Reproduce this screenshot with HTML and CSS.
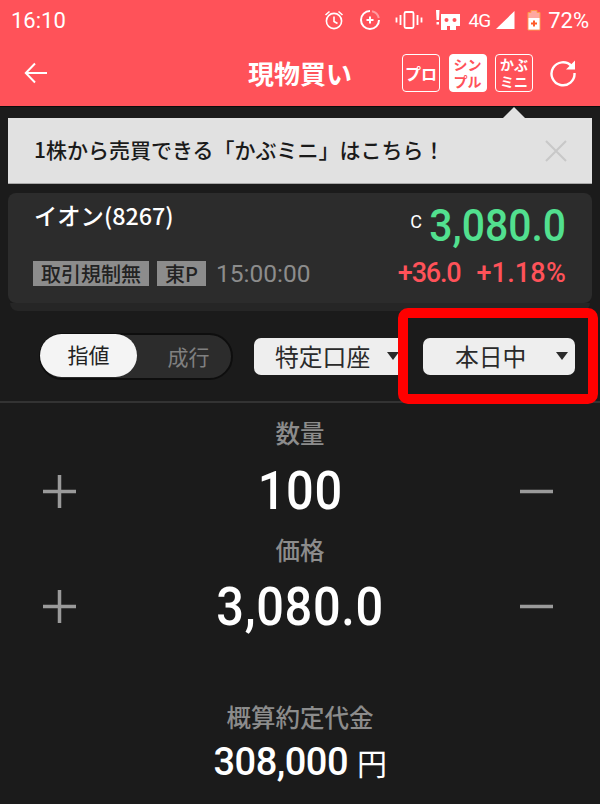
FILE: index.html
```html
<!DOCTYPE html>
<html lang="ja">
<head>
  <meta charset="UTF-8">
  <meta name="viewport" content="width=device-width, initial-scale=1">
  <title>現物買い</title>
  <link rel="stylesheet" href="styles.css">
</head>
<body>

  <header class="cabecera">
    <div class="estado">
      <span class="hora">16:10</span>
      <div class="estado-iconos">
        <svg class="ico-alarma" width="22" height="22" viewBox="0 0 22 22" fill="none" stroke="#fff" stroke-width="1.6">
          <circle cx="11" cy="12" r="7.6"/>
          <path d="M11 7.500V12.500L14.500 14.500M2.500 6L6.500 2.500M19.500 6L15.500 2.500"/>
        </svg>
        <svg class="ico-ahorro" width="22" height="22" viewBox="0 0 22 22" fill="none" stroke="#fff" stroke-width="2">
          <path d="M11 2A9 9 0 1 0 20 11"/>
          <path d="M13 2.300A9 9 0 0 1 19.800 9" stroke="#ff9a9e"/>
          <path d="M7.500 11H14.500M11 7.500V14.500"/>
        </svg>
        <svg class="ico-vibra" width="28" height="20" viewBox="0 0 28 20" fill="none" stroke="#fff" stroke-width="1.8">
          <rect x="9.500" y="2" width="9" height="16" rx="1.500"/>
          <path d="M5.500 5V15M1.500 7.500V12.500M22.500 5V15M26.500 7.500V12.500"/>
        </svg>
        <svg class="ico-robot" width="26" height="22" viewBox="0 0 26 22">
          <path fill="#fff" d="M1 1H4.500L4 11H1.500ZM1.500 13H4V15.500H1.500ZM6 5H25V17H21V21H15V17H12V21H6Z"/>
          <circle cx="11.500" cy="11" r="2" fill="#ff5259"/>
          <circle cx="19.500" cy="11" r="2" fill="#ff5259"/>
        </svg>
        <span class="red-4g">4G</span>
        <svg class="ico-senal" width="20" height="20" viewBox="0 0 20 20"><path fill="#fff" d="M19.500 1V19H1Z"/></svg>
        <svg class="ico-bateria" width="14" height="22" viewBox="0 0 14 22">
          <path fill="#ffa8a0" stroke="#ff9a4a" d="M4 1.500H10V3.500H13V21H1V3.500H4Z"/>
          <rect x="1.500" y="9" width="11" height="11.500" fill="#fff"/>
          <path stroke="#ff5c2a" stroke-width="2" d="M4 14.500H10M7 11.500V17.500"/>
        </svg>
        <span class="bateria">72%</span>
      </div>
    </div>
    <div class="barra">
      <svg class="volver" width="24" height="22" viewBox="0 0 24 22" fill="none" stroke="#fff" stroke-width="2">
        <path d="M23 11H2M11 1.500L1.800 11L11 20.500"/>
      </svg>
      <h1>現物買い</h1>
      <div class="modos">
        <span class="modo modo-corto">プロ</span>
        <span class="modo modo-doble activo">シンプル</span>
        <span class="modo modo-doble">かぶミニ</span>
      </div>
      <svg class="recargar" width="28" height="28" viewBox="0 0 28 28" fill="none" stroke="#fff" stroke-width="2.400">
        <path d="M22.500 7A11.500 11.500 0 1 0 25.500 14"/>
        <path fill="#fff" stroke="none" d="M17 10.500H26V1.500Z"/>
      </svg>
    </div>
  </header>

  <main class="contenido">
    <div class="aviso">
      <p>1株から売買できる「かぶミニ」はこちら！</p>
      <svg class="cerrar" width="24" height="24" viewBox="0 0 24 24" fill="none" stroke="#c8c8c8" stroke-width="2">
        <path d="M2 2L22 22M22 2L2 22"/>
      </svg>
    </div>

    <section class="tarjeta">
      <div class="fila">
        <span class="nombre">イオン(8267)</span>
        <span class="precio"><small>C</small><b>3,080.0</b></span>
      </div>
      <div class="fila fila-baja">
        <div class="etiquetas">
          <span class="etiqueta">取引規制無</span>
          <span class="etiqueta">東P</span>
          <span class="tiempo">15:00:00</span>
        </div>
        <div class="cambio">
          <span class="cambio-valor">+36.0</span>
          <span class="cambio-tasa">+1.18%</span>
        </div>
      </div>
    </section>
    <div class="tarjeta-fondo"></div>

    <div class="controles">
      <div class="interruptor">
        <span class="opcion activa">指値</span>
        <span class="opcion">成行</span>
      </div>
      <div class="selector selector-cuenta">特定口座<i></i></div>
      <div class="selector selector-plazo">本日中<i></i></div>
      <div class="marca"></div>
    </div>

    <section class="pedido">
      <h2>数量</h2>
      <div class="valor-fila">
        <svg class="signo" width="33" height="33" viewBox="0 0 33 33"><path d="M0 16.500H33M16.500 0V33"/></svg>
        <span class="valor">100</span>
        <svg class="signo" width="33" height="33" viewBox="0 0 33 33"><path d="M0 16.500H33"/></svg>
      </div>
      <h2>価格</h2>
      <div class="valor-fila valor-fila-baja">
        <svg class="signo" width="33" height="33" viewBox="0 0 33 33"><path d="M0 16.500H33M16.500 0V33"/></svg>
        <span class="valor">3,080.0</span>
        <svg class="signo" width="33" height="33" viewBox="0 0 33 33"><path d="M0 16.500H33"/></svg>
      </div>
      <h2 class="total-titulo">概算約定代金</h2>
      <p class="total">308,000<small>円</small></p>
    </section>
  </main>

</body>
</html>
```

FILE: styles.css
```css
* {
  box-sizing: border-box;
}
html, body {
  height: 100%;
}
body {
  margin: 0;
  overflow: hidden;
  background-color: #1b1b1b;
  color: #fff;
  font-family: "Noto Sans CJK JP", Roboto, sans-serif;
}

.cabecera {
  height: 107px;
  background-color: #ff5259;
  border-bottom: 1px solid #0c0c0c;
}
.estado {
  height: 40px;
  padding: 0 11px;
  display: flex;
  align-items: center;
  justify-content: space-between;
}
.hora {
  font-family: Roboto, sans-serif;
  font-size: 22px;
}
.estado-iconos {
  display: flex;
  align-items: center;
}
.ico-alarma,
.ico-ahorro {
  margin-right: 14px;
}
.ico-vibra {
  margin-right: 12px;
}
.red-4g {
  margin: 0 5px 0 8px;
  font-family: Roboto, sans-serif;
  font-size: 19px;
  letter-spacing: -1px;
}
.ico-bateria {
  margin: 0 7px 0 12px;
}
.bateria {
  font-family: Roboto, sans-serif;
  font-size: 22px;
}

.barra {
  height: 66px;
  padding: 0 23px 0 24px;
  display: flex;
  align-items: center;
  position: relative;
}
.barra h1 {
  position: absolute;
  left: 248px;
  margin: 0;
  font-size: 26px;
  font-weight: 700;
  line-height: 1;
}
.modos {
  margin-left: auto;
  display: flex;
  gap: 8.5px;
  margin-right: 16px;
}
.modo {
  width: 38px;
  height: 38px;
  border: 1px solid #fff;
  border-radius: 4px;
  display: flex;
  align-items: center;
  justify-content: center;
  text-align: center;
  font-size: 16px;
  font-weight: 700;
}
.modo-doble {
  padding: 0 4px;
  font-size: 14px;
  line-height: 17px;
}
.modo.activo {
  background-color: #fff;
  color: #ff5259;
}

.contenido {
  padding: 11px 8px 0;
}
.aviso {
  height: 66px;
  padding: 0 24px 3px 26px;
  background-color: #e1e1e1;
  border-bottom: 1px solid #a8a8a8;
  display: flex;
  align-items: center;
  justify-content: space-between;
  position: relative;
  color: #1a1a1a;
}
.aviso::before {
  content: "";
  position: absolute;
  top: -11px;
  left: 495px;
  border: 11px solid transparent;
  border-top: 0;
  border-bottom-color: #e1e1e1;
}
.aviso p {
  margin: 0;
  font-size: 21px;
  font-weight: 500;
}
.cerrar {
  margin-top: 3px;
}

.tarjeta {
  height: 110px;
  margin-top: 9px;
  padding: 7px 26px 0 26px;
  background-color: #2c2c2c;
  border-radius: 8px;
}
.tarjeta-fondo {
  height: 8px;
  margin: 0 2px;
  background-color: #262626;
  border-radius: 0 0 8px 8px;
}
.fila {
  display: flex;
  justify-content: space-between;
}
.fila-baja {
  align-items: center;
  margin-top: 9px;
}
.nombre {
  font-size: 23.3px;
  font-weight: 500;
  line-height: 30px;
}
.precio {
  font-family: Roboto, sans-serif;
  font-size: 44px;
  line-height: 44px;
  color: #52e08f;
}
.precio b {
  display: inline-block;
  font-weight: 500;
  transform: scaleX(0.93);
  transform-origin: right;
}
.precio small {
  margin-right: -3px;
  font-size: 18px;
  color: #fff;
  vertical-align: 13px;
}
.etiquetas {
  display: flex;
  align-items: center;
  gap: 8px;
  margin-left: -1px;
}
.etiqueta {
  height: 25px;
  padding: 0 8px;
  background-color: #8c8c8c;
  color: #222;
  font-size: 20px;
  font-weight: 500;
  line-height: 25px;
}
.tiempo {
  margin-left: 2px;
  font-family: Roboto, sans-serif;
  font-size: 24.5px;
  color: #8c8c8c;
}
.cambio {
  display: flex;
  gap: 16px;
  font-family: Roboto, sans-serif;
  font-size: 27px;
  font-weight: 500;
  color: #ff5259;
}
.cambio-valor {
  letter-spacing: -1.2px;
}
.cambio-tasa {
  letter-spacing: 0.2px;
}

.controles {
  height: 92px;
  margin: 0 -8px;
  padding: 0 25px 0 39px;
  border-bottom: 2px solid #333;
  display: flex;
  align-items: center;
  position: relative;
}
.interruptor {
  width: 194px;
  height: 47px;
  padding: 2px;
  background-color: #2c2c2c;
  border: 2px solid #0e0e0e;
  border-radius: 24px;
  display: flex;
  align-items: center;
  font-size: 21px;
  color: #808080;
}
.opcion {
  flex: 1;
  padding-left: 11px;
  text-align: center;
}
.opcion.activa {
  flex: 0 0 97px;
  height: 43px;
  margin: -2px 0 0 -3px;
  padding-left: 0;
  background-color: #f4f4f4;
  border-radius: 22px;
  color: #222;
  line-height: 41px;
}
.selector {
  height: 37px;
  padding-left: 21px;
  background-color: #eee;
  border-radius: 7px;
  color: #2a2a2a;
  font-size: 23.8px;
  line-height: 35px;
  position: relative;
}
.selector-cuenta {
  width: 152px;
  margin-left: 21px;
}
.selector-plazo {
  width: 152px;
  margin-left: 17px;
  padding-left: 32px;
}
.selector i {
  position: absolute;
  top: 14px;
  right: 7px;
  border: 6px solid transparent;
  border-bottom: 0;
  border-top: 8px solid #2a2a2a;
}
.marca {
  position: absolute;
  left: 398px;
  top: -3px;
  width: 200px;
  height: 96px;
  border: 10px solid #f00;
  border-radius: 10px;
}

.pedido {
  text-align: center;
}
.pedido h2 {
  margin: 0;
  font-size: 24.5px;
  font-weight: 500;
  line-height: 30px;
  color: #8c8c8c;
}
.pedido h2:first-child {
  margin-top: 15px;
}
.valor-fila {
  height: 87px;
  margin: 0 -8px;
  padding: 0 47px 1px 43px;
  display: flex;
  align-items: center;
  justify-content: space-between;
}
.valor-fila-baja {
  height: 84px;
}
.valor {
  margin-left: 5px;
  font-family: Roboto, sans-serif;
  font-size: 53px;
  font-weight: 500;
  letter-spacing: 0.7px;
  transform: scaleX(0.92);
}
.signo {
  fill: none;
  stroke: #9a9a9a;
  stroke-width: 3.500;
}
.pedido .total-titulo {
  margin-top: 53px;
}
.total {
  margin: 7px 0 0;
  font-family: Roboto, sans-serif;
  font-size: 38px;
  font-weight: 500;
  letter-spacing: -0.5px;
  line-height: 46px;
}
.total small {
  margin-left: 9px;
  font-family: "Noto Sans CJK JP", sans-serif;
  font-size: 30px;
  font-weight: 400;
}
```
